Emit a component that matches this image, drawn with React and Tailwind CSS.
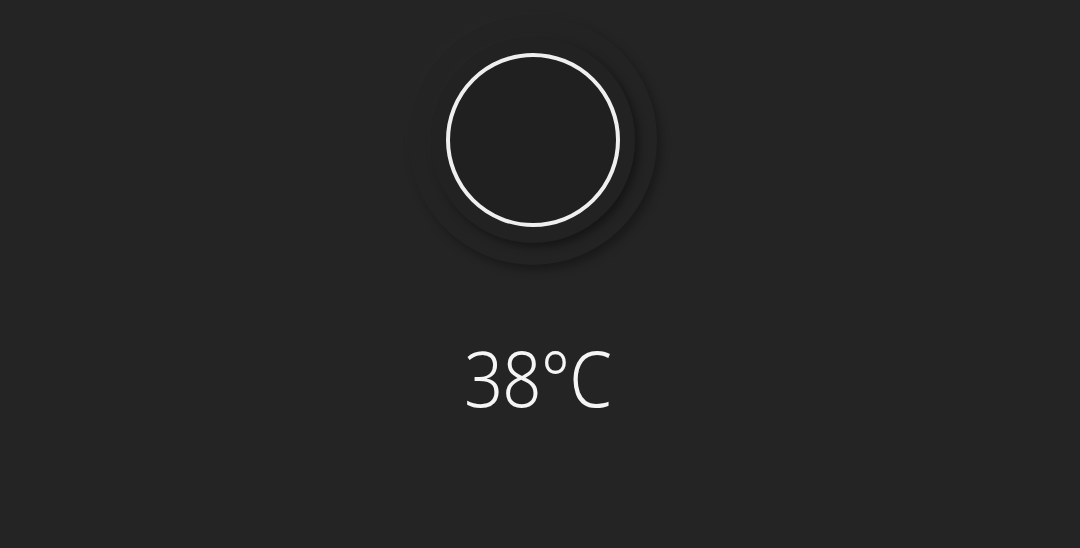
export default function App() {
  return (
    <div className="w-full h-[548px] bg-[#242424] flex flex-col items-center overflow-hidden" style={{ fontFamily: '"Noto Sans", "Open Sans", sans-serif' }}>
      {/* dial */}
      <div className="mt-[15px] mr-[14px] w-[248px] h-[250px] rounded-full bg-[#232323] flex items-center justify-center shadow-[4px_5px_10px_rgba(0,0,0,0.3),-4px_-4px_10px_rgba(255,255,255,0.015)]">
        <div className="w-[204px] h-[206px] rounded-full bg-[#222222] flex items-center justify-center shadow-[4px_4px_8px_rgba(0,0,0,0.4),-3px_-3px_8px_rgba(255,255,255,0.02)]">
          <div className="w-[174px] h-[174px] rounded-full bg-[#202020] border-[4px] border-[#efefef]" />
        </div>
      </div>

      {/* temperature */}
      <div className="mt-[73px] mr-[4px] text-[78px] leading-none font-light text-[#f5f5f5] scale-x-[0.88] tracking-[-1px]">
        38°C
      </div>
    </div>
  );
}
